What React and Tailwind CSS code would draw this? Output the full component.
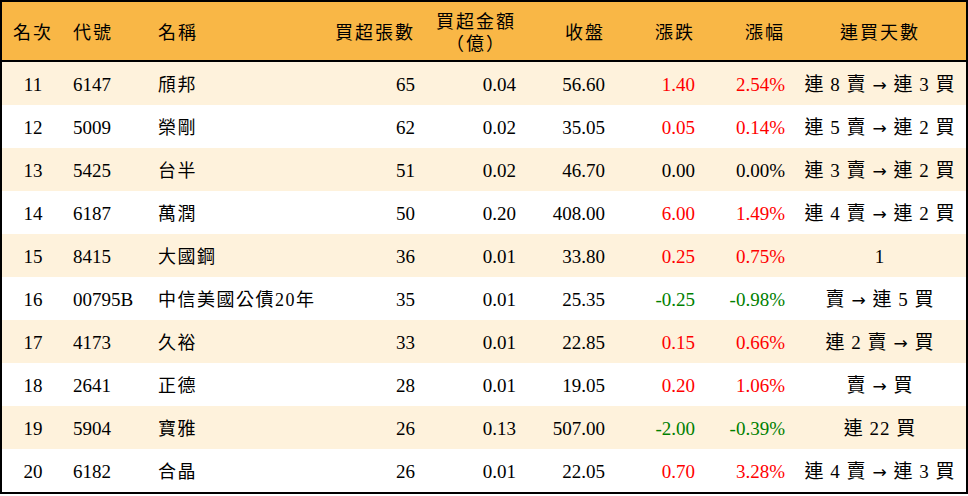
import React from "react";

const rows = [
  ["11", "6147", "頎邦", "65", "0.04", "56.60", "1.40", "2.54%", "連 8 賣 → 連 3 買", "r"],
  ["12", "5009", "榮剛", "62", "0.02", "35.05", "0.05", "0.14%", "連 5 賣 → 連 2 買", "r"],
  ["13", "5425", "台半", "51", "0.02", "46.70", "0.00", "0.00%", "連 3 賣 → 連 2 買", "n"],
  ["14", "6187", "萬潤", "50", "0.20", "408.00", "6.00", "1.49%", "連 4 賣 → 連 2 買", "r"],
  ["15", "8415", "大國鋼", "36", "0.01", "33.80", "0.25", "0.75%", "1", "r"],
  ["16", "00795B", "中信美國公債20年", "35", "0.01", "25.35", "-0.25", "-0.98%", "賣 → 連 5 買", "g"],
  ["17", "4173", "久裕", "33", "0.01", "22.85", "0.15", "0.66%", "連 2 賣 → 買", "r"],
  ["18", "2641", "正德", "28", "0.01", "19.05", "0.20", "1.06%", "賣 → 買", "r"],
  ["19", "5904", "寶雅", "26", "0.13", "507.00", "-2.00", "-0.39%", "連 22 買", "g"],
  ["20", "6182", "合晶", "26", "0.01", "22.05", "0.70", "3.28%", "連 4 賣 → 連 3 買", "r"],
];

const font = { fontFamily: '"Liberation Serif", "Noto Sans CJK TC", serif' };

function Streak({ text }) {
  const parts = text.split("→");
  return (
    <span className="tracking-[1px]">
      {parts.map((p, i) => (
        <React.Fragment key={i}>
          {i > 0 && (
            <span style={{ fontFamily: '"DejaVu Sans", sans-serif' }} className="text-[17px]">
              →
            </span>
          )}
          {p}
        </React.Fragment>
      ))}
    </span>
  );
}

export default function App() {
  return (
    <div className="w-[968px] h-[496px] bg-white" style={font}>
      <div className="border-2 border-black w-[968px] text-[19px] text-black leading-[22px]">
        <div className="flex h-[60px] items-center pt-[3px] bg-[#F9B746] border-b-2 border-black text-[18px]">
          <div className="w-[62px] text-center px-[9px] tracking-[2px]">名次</div>
          <div className="w-[85px] px-[9px] tracking-[2px]">代號</div>
          <div className="w-[173px] px-[9px] tracking-[2px]">名稱</div>
          <div className="w-[102px] px-[9px] text-right tracking-[2px]">買超張數</div>
          <div className="w-[101px] px-[9px] text-right">
            <div className="inline-block text-center tracking-[2px]">
              <div>買超金額</div>
              <div>（億）</div>
            </div>
          </div>
          <div className="w-[89px] px-[9px] text-right tracking-[2px]">收盤</div>
          <div className="w-[90px] px-[9px] text-right tracking-[2px]">漲跌</div>
          <div className="w-[90px] px-[9px] text-right tracking-[2px]">漲幅</div>
          <div className="w-[172px] px-[9px] text-center tracking-[2px]">連買天數</div>
        </div>
        {rows.map((r, i) => {
          const c =
            r[9] === "r" ? "text-[#FF0000]" : r[9] === "g" ? "text-[#008000]" : "text-black";
          return (
            <div
              key={r[0]}
              className={`flex h-[43px] items-center pt-[3px] ${i % 2 === 0 ? "bg-[#FEF2DC]" : "bg-white"}`}
            >
              <div className="w-[62px] text-center px-[9px]">{r[0]}</div>
              <div className="w-[85px] px-[9px]">{r[1]}</div>
              <div className="w-[173px] px-[9px] whitespace-nowrap text-[18px] tracking-[1.5px]">{r[2]}</div>
              <div className="w-[102px] px-[9px] text-right">{r[3]}</div>
              <div className="w-[101px] px-[9px] text-right">{r[4]}</div>
              <div className="w-[89px] px-[9px] text-right">{r[5]}</div>
              <div className={`w-[90px] px-[9px] text-right ${c}`}>{r[6]}</div>
              <div className={`w-[90px] px-[9px] text-right ${c}`}>{r[7]}</div>
              <div className="w-[172px] px-[2px] text-center whitespace-nowrap">
                <Streak text={r[8]} />
              </div>
            </div>
          );
        })}
      </div>
    </div>
  );
}
